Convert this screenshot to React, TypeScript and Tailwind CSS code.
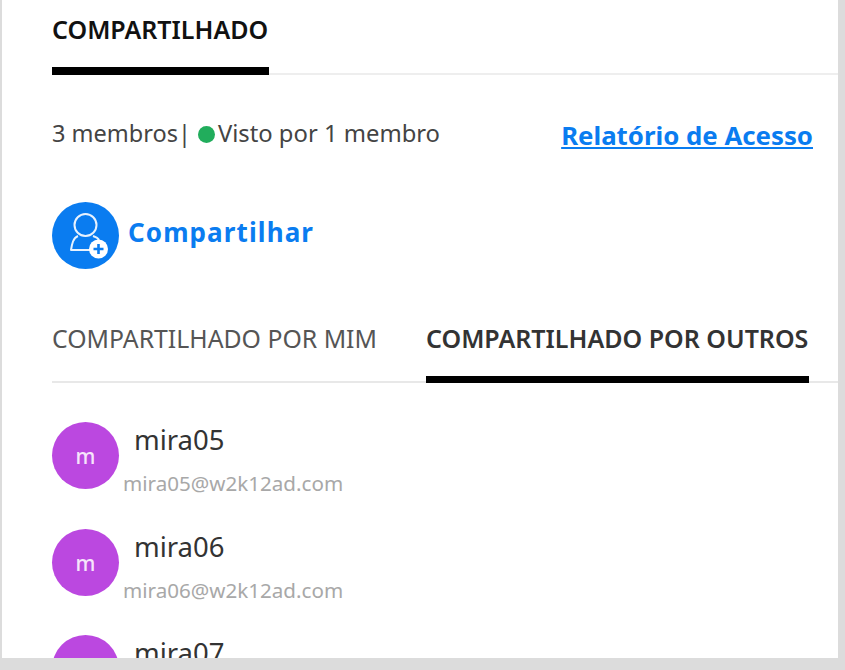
const font = { fontFamily: '"Noto Sans", "Open Sans", sans-serif' };

function ShareIcon() {
  return (
    <svg width="67" height="67" viewBox="0 0 67 67" className="shrink-0">
      <circle cx="33.5" cy="33.5" r="33.5" fill="#0a7cf0" />
      <circle cx="33.5" cy="23" r="11" fill="none" stroke="#e8f2fe" strokeWidth="2" />
      <path d="M26 34 C21 36 20 42 19 48 H38" fill="none" stroke="#e8f2fe" strokeWidth="2" strokeLinejoin="round" />
      <path d="M41 34 C44 35 46 36 47 38" fill="none" stroke="#e8f2fe" strokeWidth="2" />
      <circle cx="46.5" cy="47" r="9.5" fill="#ffffff" />
      <path d="M46.5 42 V52 M41.5 47 H51.5" stroke="#0a7cf0" strokeWidth="2.6" />
    </svg>
  );
}

function Member({ name }: { name: string }) {
  return (
    <div className="flex h-[106px] shrink-0 first:mb-[1px]">
      <div className="w-[67px] h-[67px] shrink-0 rounded-full bg-[#bb48e0] flex items-center justify-center pt-[3px] text-[#f6e4fb] text-[21px] font-medium">m</div>
      <div className="-ml-[2px]">
        <div className="pl-[17px] -mt-[1px] h-[38px] text-[27.5px] leading-[38px] text-[#333333]">{name}</div>
        <div className="pl-[6px] mt-[11px] text-[20.6px] leading-[26px] text-[#a8a8a8]">{name}@w2k12ad.com</div>
      </div>
    </div>
  );
}

export default function App() {
  return (
    <div className="w-[845px] h-[670px] bg-[#dcdcdc] overflow-hidden" style={font}>
      <div className="ml-[2px] w-[836px] h-[658px] bg-white overflow-hidden">
        <div className="h-[75px] ml-[50px] border-b-2 border-[#eeeeee]">
          <div className="w-[217px] h-[75px] border-b-[8px] border-black pt-[12px] text-[25px] leading-[34px] font-semibold text-[#111111] whitespace-nowrap">COMPARTILHADO</div>
        </div>
        <div className="flex justify-between pl-[50px] pr-[25px] pt-[43px] h-[127px]">
          <div className="flex items-center h-[32px] text-[23.5px] text-[#444444] whitespace-nowrap">
            3 membros
            <span className="ml-0">|</span>
            <span className="ml-[7px] mr-[3px] w-[17px] h-[17px] rounded-full bg-[#21ad5c]"></span>
            <span className="text-[23.8px]">Visto por 1 membro</span>
          </div>
          <a className="mt-[1px] h-[32px] text-[25.8px] leading-[32px] font-bold text-[#0a7cf0] underline whitespace-nowrap">Relatório de Acesso</a>
        </div>
        <div className="flex items-center pl-[50px] h-[67px] gap-[9px]">
          <ShareIcon />
          <span className="mb-[8px] text-[26px] leading-[44px] font-bold text-[#0a7cf0] tracking-[1.1px]">Compartilhar</span>
        </div>
        <div className="mt-[34px] ml-[50px] h-[80px] border-b-2 border-[#e8e8e8] flex gap-[49px] whitespace-nowrap">
          <div className="w-[325px] pt-[19px] text-[24.8px] leading-[32px] text-[#555555]">COMPARTILHADO POR MIM</div>
          <div className="w-[383px] h-[80px] pt-[19px] border-b-[7px] border-black text-[25px] leading-[32px] font-semibold text-[#333333]">COMPARTILHADO POR OUTROS</div>
        </div>
        <div className="pl-[50px] pt-[39px] flex flex-col">
          <Member name="mira05" />
          <Member name="mira06" />
          <Member name="mira07" />
        </div>
      </div>
    </div>
  );
}
